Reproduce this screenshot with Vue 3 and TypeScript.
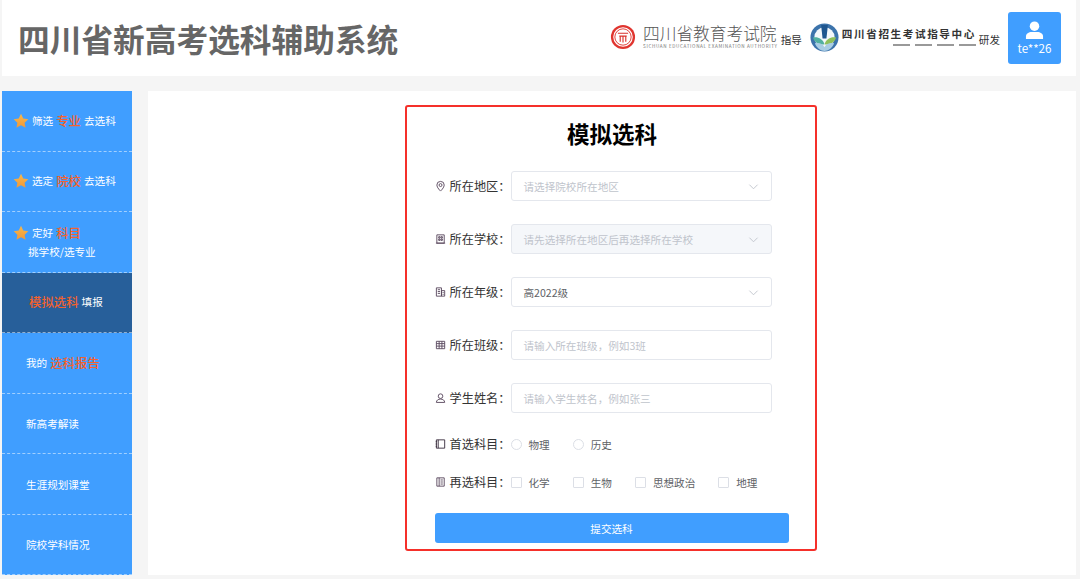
<script setup lang="ts">
interface Part { t: string; hot?: boolean }
interface Item { star?: boolean; parts: Part[]; sub?: string; active?: boolean; pad: number }
const items: Item[] = [
  { star: true, pad: 11, parts: [{ t: '筛选' }, { t: '专业', hot: true }, { t: '去选科' }] },
  { star: true, pad: 11, parts: [{ t: '选定' }, { t: '院校', hot: true }, { t: '去选科' }] },
  { star: true, pad: 11, sub: '挑学校/选专业', parts: [{ t: '定好' }, { t: '科目', hot: true }] },
  { active: true, pad: 27, parts: [{ t: '模拟选科', hot: true }, { t: '填报' }] },
  { pad: 24, parts: [{ t: '我的' }, { t: '选科报告', hot: true }] },
  { pad: 24, parts: [{ t: '新高考解读' }] },
  { pad: 24, parts: [{ t: '生涯规划课堂' }] },
  { pad: 24, parts: [{ t: '院校学科情况' }] }
]
const fields = [
  { label: '所在地区', icon: 'pin', text: '请选择院校所在地区', kind: 'select', ph: true },
  { label: '所在学校', icon: 'school', text: '请先选择所在地区后再选择所在学校', kind: 'select', ph: true, disabled: true },
  { label: '所在年级', icon: 'grade', text: '高2022级', kind: 'select', ph: false },
  { label: '所在班级', icon: 'class', text: '请输入所在班级，例如3班', kind: 'input', ph: true },
  { label: '学生姓名', icon: 'user', text: '请输入学生姓名，例如张三', kind: 'input', ph: true }
]
const firstChoices = ['物理', '历史']
const secondChoices = ['化学', '生物', '思想政治', '地理']
const iconPaths: Record<string, string> = {
  pin: 'M6 1a4 4 0 0 0-4 4c0 2.800 4 6.500 4 6.500S10 7.800 10 5a4 4 0 0 0-4-4zM6 3.400a1.600 1.600 0 1 1 0 3.200 1.600 1.600 0 0 1 0-3.200z',
  school: 'M2 1.500h8v9H2zM1 10.500h10M4 3.500h1.500v1.500H4zM6.500 3.500H8v1.500H6.500zM4 6h1.500v1.500H4zM6.500 6H8v1.500H6.500z',
  grade: 'M1.500 1.500h5.500v9H1.500zM7 4.500h3.500v6H7zM3 3.500h2.500M3 5.500h2.500M3 7.500h2.500M8.200 6.500h1.200M8.200 8.500h1.200',
  class: 'M1.500 2h9v8h-9zM1.500 4.500h9M1.500 7.200h9M4.500 2v8M7.500 2v8',
  user: 'M6 1.500a2.500 2.500 0 1 1 0 5 2.500 2.500 0 0 1 0-5zM1.500 10.800c0-2.400 2-3.600 4.500-3.600s4.500 1.200 4.500 3.600z',
  book: 'M1.500 1.500h9v9h-9zM3.500 1.500v9M0.800 3.500h1.500M0.800 6h1.500M0.800 8.500h1.500',
  list: 'M2 1.500h8v9H2zM4.500 1.500v9M6 3.800h2.500M6 6h2.500M6 8.200h2.500'
}
</script>

<template>
  <div class="page">
    <header class="top">
      <h1 class="brand">四川省新高考选科辅助系统</h1>
      <div class="partners">
        <svg class="seal" viewBox="0 0 28 28" width="26" height="26">
          <circle cx="14" cy="14" r="13" fill="#e0352f" />
          <circle cx="14" cy="14" r="10.500" fill="#fff" />
          <circle cx="14" cy="14" r="8.800" fill="none" stroke="#e0352f" stroke-width="1" />
          <path d="M8.500 10h11M10 13h8M11 13v6M14 13v7M17 13v6" fill="none" stroke="#d9322c" stroke-width="1.200" />
        </svg>
        <div class="org">
          <span class="org-cn">四川省教育考试院</span>
          <span class="org-en">SICHUAN EDUCATIONAL EXAMINATION AUTHORITY</span>
        </div>
        <span class="role role-first">指导</span>
        <svg class="seal2" viewBox="0 0 30 30" width="29" height="29">
          <circle cx="15" cy="15" r="14.500" fill="#3c73ab" />
          <circle cx="15" cy="15" r="10.500" fill="#f3f7fa" />
          <path d="M11.500 2h7l-1.500 14h-4z" fill="#1f568f" />
          <path d="M3 15c5-1 10 1 12 7-5 1-10-1-12-7z" fill="#52b0a0" />
          <path d="M27 15c-5-1-10 1-12 7 5 1 10-1 12-7z" fill="#8fc05c" />
          <path d="M5 21c4-1 8 0 10 4 2-4 6-5 10-4-2 5-6 8-10 8s-8-3-10-8z" fill="#a9cde4" />
        </svg>
        <div class="org org2">
          <span class="org2-cn">四川省招生考试指导中心</span>
          <span class="org2-marks"><i></i><i></i><i></i><i></i></span>
        </div>
        <span class="role">研发</span>
      </div>
      <div class="account">
        <svg viewBox="0 0 20 20" width="19" height="19">
          <circle cx="10" cy="5.500" r="5" fill="#fff" />
          <path d="M1 19v-2.500C1 13 4 11.500 7 11.500h6c3 0 6 1.500 6 5V19z" fill="#fff" />
        </svg>
        <span>te**26</span>
      </div>
    </header>

    <div class="body">
      <nav class="side">
        <div v-for="(item, i) in items" :key="i" class="nav" :class="{ active: item.active }" :style="{ paddingLeft: item.pad + 'px' }">
          <div class="nav-line">
            <svg v-if="item.star" class="star" viewBox="0 0 20 20" width="16" height="16">
              <defs>
                <linearGradient :id="'g' + i" x1="0" y1="0" x2="0" y2="1">
                  <stop offset="0" stop-color="#f7b84a" />
                  <stop offset="1" stop-color="#f0983a" />
                </linearGradient>
              </defs>
              <path d="M10 1l2.800 5.900 6.400.8-4.700 4.400 1.200 6.400L10 15.400l-5.700 3.100 1.200-6.400L.8 7.700l6.400-.8z" :fill="'url(#g' + i + ')'" />
            </svg>
            <span v-for="p in item.parts" :key="p.t" :class="p.hot ? 'hot' : 'plain'">{{ p.t }}</span>
          </div>
          <div v-if="item.sub" class="nav-sub">{{ item.sub }}</div>
        </div>
      </nav>

      <main class="main">
        <section class="panel">
          <h2 class="panel-title">模拟选科</h2>
          <div v-for="f in fields" :key="f.label" class="row">
            <label class="label">
              <svg viewBox="0 0 12 12" width="12" height="12"><path :d="iconPaths[f.icon]" fill="none" stroke="#5b4a60" stroke-width="1" /></svg>
              <span>{{ f.label }}：</span>
            </label>
            <div class="control" :class="{ disabled: f.disabled, ph: f.ph }">
              <span>{{ f.text }}</span>
              <svg v-if="f.kind === 'select'" class="chev" viewBox="0 0 12 12" width="11" height="11"><path d="M1.500 4l4.500 4.500L10.500 4" fill="none" stroke="#c0c4cc" stroke-width="1" /></svg>
            </div>
          </div>
          <div class="row choice first">
            <label class="label">
              <svg viewBox="0 0 12 12" width="12" height="12"><path :d="iconPaths.book" fill="none" stroke="#3c3040" stroke-width="1" /></svg>
              <span>首选科目：</span>
            </label>
            <div class="opts">
              <span v-for="c in firstChoices" :key="c" class="opt"><i class="radio"></i>{{ c }}</span>
            </div>
          </div>
          <div class="row choice second">
            <label class="label">
              <svg viewBox="0 0 12 12" width="12" height="12"><path :d="iconPaths.list" fill="none" stroke="#5b4a60" stroke-width="1" /></svg>
              <span>再选科目：</span>
            </label>
            <div class="opts">
              <span v-for="c in secondChoices" :key="c" class="opt"><i class="check"></i>{{ c }}</span>
            </div>
          </div>
          <button class="submit" type="button">提交选科</button>
        </section>
      </main>
    </div>
  </div>
</template>

<style>
html, body { margin: 0; background: #f5f5f5; }
</style>

<style scoped>
.page {
  width: 1080px;
  height: 579px;
  overflow: hidden;
  background: #f5f5f5;
  font-family: "Noto Sans CJK SC", "Noto Sans", sans-serif;
  box-sizing: border-box;
  padding: 0 4px 4px 2px;
  display: flex;
  flex-direction: column;
}
.top {
  height: 76px;
  flex: none;
  background: #fff;
  display: flex;
  align-items: center;
  padding: 0 15px 4px 16px;
  box-sizing: border-box;
}
.brand { margin: 6px 0 0; font-size: 31.7px; font-weight: 700; color: #666; line-height: 1; flex: 1; }
.partners { display: flex; align-items: center; margin-top: 2px; }
.seal { margin-right: 7px; }
.org { display: flex; flex-direction: column; }
.org-cn { font-size: 16.7px; line-height: 19px; color: #555; font-weight: 300; white-space: nowrap; }
.org-en { font-size: 4.600px; line-height: 7px; color: #777; white-space: nowrap; letter-spacing: .64px; }
.role { font-size: 10.600px; color: #333; margin: 5px 0 0 2px; white-space: nowrap; }
.role-first { margin-left: 3px; }
.seal2 { margin: 0 3px 0 8px; }
.org2 { width: 135px; margin-top: -3px; }
.org2-cn { font-size: 10.600px; line-height: 15px; font-weight: 700; color: #333; letter-spacing: 1.6px; white-space: nowrap; }
.org2-marks { display: flex; justify-content: flex-end; gap: 5px; padding: 3px 1px 0 0; }
.org2-marks i { width: 17px; height: 2px; background: #999; }
.account {
  width: 53px;
  height: 52px;
  margin: 4px 0 0 8px;
  background: #409eff;
  border-radius: 3px;
  color: #fff;
  display: flex;
  flex-direction: column;
  align-items: center;
  justify-content: flex-end;
  gap: 2px;
  padding-bottom: 9px;
  box-sizing: border-box;
  font-size: 11.600px;
  line-height: 13px;
}
.body { flex: 1; display: flex; gap: 16px; margin-top: 15px; min-height: 0; }
.side { width: 130px; flex: none; display: grid; grid-template-rows: repeat(8, 1fr); background: #409eff; }
.nav {
  min-height: 0;
  box-sizing: border-box;
  display: flex;
  flex-direction: column;
  justify-content: center;
  border-bottom: 1px dashed rgba(255, 255, 255, .5);
  color: #fff;
  font-size: 10.600px;
}
.nav:nth-child(n + 6) { padding-top: 2px; }
.nav.active { background: #275f9a; }
.nav-line { display: flex; align-items: center; gap: 3px; white-space: nowrap; line-height: 16px; }
.star { flex: none; }
.hot { color: #f4622d; font-size: 12.400px; font-weight: 500; }
.nav-sub { margin: 3px 0 0 15px; line-height: 15px; white-space: nowrap; }
.main { flex: 1; background: #fff; display: flex; justify-content: center; padding-top: 14px; }
.panel {
  width: 412px;
  height: 446px;
  box-sizing: border-box;
  border: 2px solid #f5302a;
  border-radius: 3px;
  padding: 12px 27px 0 28px;
  display: flex;
  flex-direction: column;
  margin-left: -3px;
}
.panel-title { margin: 0 0 24px; padding-left: 2px; text-align: center; font-size: 22.500px; line-height: 28px; font-weight: 700; color: #000; }
.row { display: flex; align-items: center; height: 30px; margin-bottom: 23px; }
.label { width: 76px; flex: none; display: flex; align-items: center; gap: 4px; font-size: 12.200px; color: #333; white-space: nowrap; }
.control {
  width: 261px;
  height: 30px;
  box-sizing: border-box;
  border: 1px solid #e4e7ed;
  border-radius: 3px;
  background: #fff;
  display: flex;
  align-items: center;
  justify-content: space-between;
  padding: 0 12px 0 12px;
  font-size: 10.600px;
  color: #606266;
}
.control.ph { color: #c0c4cc; }
.control.disabled { background: #f5f7fa; }
.choice { height: 18px; }
.choice.first { margin: -1px 0 20px; }
.choice.second { margin: 0 0 22px; }
.opts { display: flex; font-size: 10.600px; color: #606266; }
.opt { display: flex; align-items: center; gap: 7px; margin-right: 23px; white-space: nowrap; }
.radio { width: 9px; height: 9px; border: 1px solid #dcdfe6; border-radius: 50%; display: block; }
.check { width: 9px; height: 9px; border: 1px solid #dcdfe6; border-radius: 1px; display: block; }
.submit {
  width: 354px;
  height: 30px;
  flex: none;
  margin: 0;
  padding: 0;
  border: none;
  border-radius: 3px;
  background: #409eff;
  color: #fff;
  font-family: inherit;
  font-size: 10.600px;
}
</style>
